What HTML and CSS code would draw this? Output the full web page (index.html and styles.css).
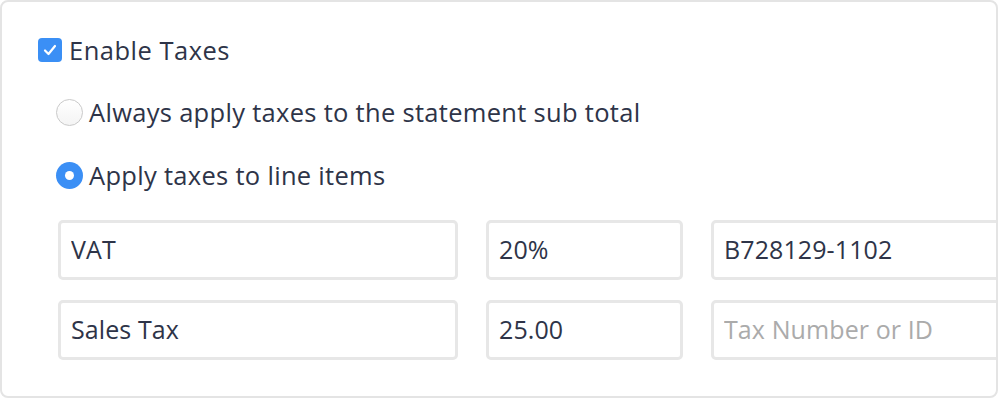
FILE: index.html
```html
<!DOCTYPE html>
<html lang="en">
<head>
    <meta charset="UTF-8">
    <title>Tax Settings</title>
    <link rel="stylesheet" href="styles.css">
</head>
<body>
    <div class="card">
        <label class="check-row">
            <span class="checkbox">
                <svg width="14" height="12" viewBox="0 0 14 12"><path d="M2 6.5 L5.5 10 L12 2" fill="none" stroke="#fff" stroke-width="2.2" stroke-linecap="round" stroke-linejoin="round"/></svg>
            </span>
            <span class="label-text">Enable Taxes</span>
        </label>

        <div class="options">
            <label class="radio-row">
                <span class="radio"></span>
                <span class="radio-text">Always apply taxes to the statement sub total</span>
            </label>
            <label class="radio-row">
                <span class="radio checked"><span class="dot"></span></span>
                <span class="radio-text">Apply taxes to line items</span>
            </label>
        </div>

        <div class="tax-rows">
            <div class="tax-row">
                <input class="field name" type="text" value="VAT">
                <input class="field rate" type="text" value="20%">
                <input class="field number" type="text" value="B728129-1102">
            </div>
            <div class="tax-row">
                <input class="field name" type="text" value="Sales Tax">
                <input class="field rate" type="text" value="25.00">
                <input class="field number" type="text" placeholder="Tax Number or ID">
            </div>
        </div>
    </div>
</body>
</html>
```

FILE: styles.css
```css
body {
    margin: 0;
    background: #fff;
    font-family: "Open Sans", Arial, sans-serif;
    color: #2e3448;
}
.card {
    box-sizing: border-box;
    width: 998px;
    height: 398px;
    border: 2px solid #e4e4e4;
    border-radius: 8px;
    padding: 28px 0 0 36px;
    overflow: hidden;
}
.check-row {
    display: flex;
    align-items: center;
    height: 40px;
}
.checkbox {
    width: 24px;
    height: 24px;
    border-radius: 4px;
    background: #3b8ff5;
    display: flex;
    align-items: center;
    justify-content: center;
    margin-right: 7px;
}
.label-text {
    font-size: 25.5px;
    letter-spacing: 0.5px;
}
.options {
    padding-left: 18px;
    padding-top: 22px;
}
.radio-row {
    display: flex;
    align-items: center;
    height: 40px;
    margin-bottom: 23px;
}
.radio {
    box-sizing: border-box;
    width: 27px;
    height: 27px;
    border-radius: 50%;
    border: 1px solid #c9c9c9;
    background: linear-gradient(#fff, #f4f4f4);
    margin-right: 6px;
    display: flex;
    align-items: center;
    justify-content: center;
}
.radio.checked {
    border: none;
    background: #3b8ff5;
}
.dot {
    width: 9px;
    height: 9px;
    border-radius: 50%;
    background: #fff;
}
.radio-text {
    font-size: 25.5px;
    letter-spacing: 0.3px;
}
.tax-rows {
    padding-left: 20px;
    padding-top: 2px;
}
.tax-row {
    display: flex;
    gap: 28px;
    margin-bottom: 20px;
}
.field {
    box-sizing: border-box;
    height: 60px;
    border: 3px solid #e7e7e7;
    border-radius: 5px;
    padding: 0 10px 3px;
    font-family: "Open Sans", Arial, sans-serif;
    font-size: 25px;
    letter-spacing: 0.1px;
    color: #2e3448;
    background: #fff;
    outline: none;
    flex: none;
}
.field::placeholder {
    color: #ababab;
}
.name {
    width: 400px;
}
.rate {
    width: 197px;
}
.number {
    width: 320px;
}
```
